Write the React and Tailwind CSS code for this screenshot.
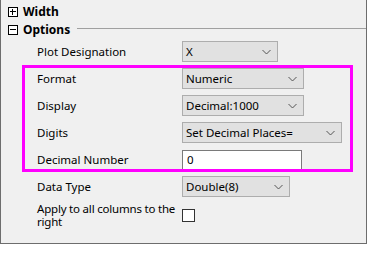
import React from "react";

const font = { fontFamily: '"Noto Sans", "Segoe UI", sans-serif' };

function Chevron() {
  return (
    <svg width="9" height="6" viewBox="0 0 9 6" className="shrink-0">
      <path d="M0.5 1 L4.5 5 L8.5 1" fill="none" stroke="#555" strokeWidth="1" />
    </svg>
  );
}

function Combo({ value, width }) {
  return (
    <div
      className={`flex h-[21px] items-center justify-between border border-[#adadad] bg-[#e1e1e1] pl-[3px] pr-[6px] text-[11.5px] text-black ${width}`}
    >
      <span className="leading-none">{value}</span>
      <Chevron />
    </div>
  );
}

function Row({ label, children }) {
  return (
    <div className="flex h-[27px] items-center">
      <div className="w-[145px] pl-[36px] text-[11.5px] leading-none text-black box-content">{label}</div>
      <div className="flex items-center">{children}</div>
    </div>
  );
}

function Toggle({ open }) {
  return (
    <div className="relative h-[10px] w-[10px] border border-black bg-white">
      <div className="absolute left-[1px] top-[3px] h-[1px] w-[6px] bg-black" />
      {!open && <div className="absolute left-[3px] top-[1px] h-[6px] w-[1px] bg-black" />}
    </div>
  );
}

export default function App() {
  return (
    <div className="h-[260px] w-[369px] bg-white" style={font}>
      <div className="relative h-[244px] w-[367px] border-x border-b border-[#6d6d6d] bg-[#f0f0f0]">
        <div className="flex h-[19px] items-center gap-[5px] pl-[7px] pt-[4px]">
          <Toggle open={false} />
          <span className="text-[12px] font-bold leading-none text-black">Width</span>
        </div>
        <div className="flex h-[19px] items-center gap-[5px] pl-[7px] pt-[2px]">
          <Toggle open />
          <span className="text-[12px] font-bold leading-none text-black">Options</span>
          <div className="ml-[2px] mt-[-2px] h-[1px] w-[289px] bg-[#a0a0a0]" />
        </div>

        <Row label="Plot Designation">
          <Combo value="X" width="w-[96px]" />
        </Row>
        <Row label="Format">
          <Combo value="Numeric" width="w-[122px]" />
        </Row>
        <Row label="Display">
          <Combo value="Decimal:1000" width="w-[122px]" />
        </Row>
        <Row label="Digits">
          <Combo value="Set Decimal Places=" width="w-[160px]" />
        </Row>
        <Row label="Decimal Number">
          <div className="flex h-[20px] w-[120px] items-center border border-[#7a7a7a] bg-white pl-[4px] text-[11.5px] leading-none text-black">
            0
          </div>
        </Row>
        <Row label="Data Type">
          <Combo value="Double(8)" width="w-[108px]" />
        </Row>
        <div className="flex items-center pt-[2px]">
          <div className="mr-[4px] w-[141px] pl-[36px] text-[11.5px] leading-[13px] tracking-[-0.2px] text-black box-content">
            Apply to all columns to the right
          </div>
          <div className="h-[13px] w-[13px] border border-[#333] bg-white" />
        </div>

        <div className="pointer-events-none absolute left-[21px] top-[65px] h-[107px] w-[331px] border-[3px] border-[#ff00ff]" />
      </div>
    </div>
  );
}
